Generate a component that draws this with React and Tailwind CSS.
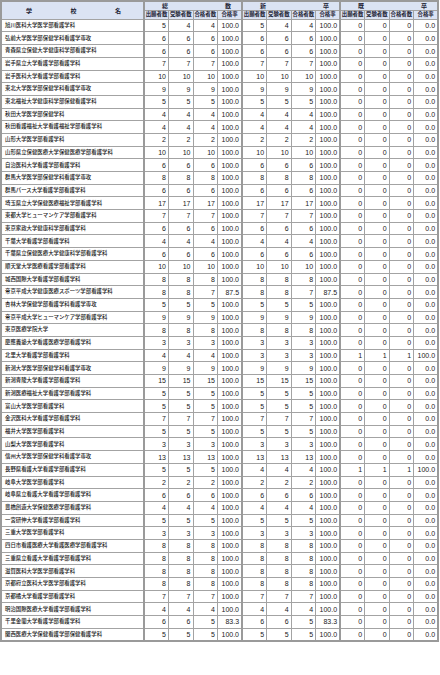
import React from 'react';

// [school, applicants, examinees, passed, old-grad applicants, old examinees, old passed]
const schools = [
  ['旭川医科大学医学部看護学科', 5, 4, 4],
  ['弘前大学医学部保健学科看護学専攻', 6, 6, 6],
  ['青森県立保健大学健康科学部看護学科', 6, 6, 6],
  ['岩手県立大学看護学部看護学科', 7, 7, 7],
  ['岩手医科大学看護学部看護学科', 10, 10, 10],
  ['東北大学医学部保健学科看護学専攻', 9, 9, 9],
  ['東北福祉大学健康科学部保健看護学科', 5, 5, 5],
  ['秋田大学医学部保健学科', 4, 4, 4],
  ['秋田看護福祉大学看護福祉学部看護学科', 4, 4, 4],
  ['山形大学医学部看護学科', 2, 2, 2],
  ['山形県立保健医療大学保健医療学部看護学科', 10, 10, 10],
  ['自治医科大学看護学部看護学科', 6, 6, 6],
  ['群馬大学医学部保健学科看護学専攻', 8, 8, 8],
  ['群馬パース大学看護学部看護学科', 6, 6, 6],
  ['埼玉県立大学保健医療福祉学部看護学科', 17, 17, 17],
  ['東都大学ヒューマンケア学部看護学科', 7, 7, 7],
  ['東京家政大学健康科学部看護学科', 6, 6, 6],
  ['千葉大学看護学部看護学科', 4, 4, 4],
  ['千葉県立保健医療大学健康科学部看護学科', 6, 6, 6],
  ['順天堂大学医療看護学部看護学科', 10, 10, 10],
  ['城西国際大学看護学部看護学科', 8, 8, 8],
  ['帝京平成大学健康医療スポーツ学部看護学科', 8, 8, 7],
  ['杏林大学保健学部看護学科看護学専攻', 5, 5, 5],
  ['帝京平成大学ヒューマンケア学部看護学科', 9, 9, 9],
  ['東京医療学院大学', 8, 8, 8],
  ['慶應義塾大学看護医療学部看護学科', 3, 3, 3],
  ['北里大学看護学部看護学科', 4, 4, 4, 1, 1, 1],
  ['新潟大学医学部保健学科看護学専攻', 9, 9, 9],
  ['新潟青陵大学看護学部看護学科', 15, 15, 15],
  ['新潟医療福祉大学看護学部看護学科', 5, 5, 5],
  ['富山大学医学部看護学科', 5, 5, 5],
  ['金沢医科大学看護学部看護学科', 7, 7, 7],
  ['福井大学医学部看護学科', 5, 5, 5],
  ['山梨大学医学部看護学科', 3, 3, 3],
  ['信州大学医学部保健学科看護学専攻', 13, 13, 13],
  ['長野県看護大学看護学部看護学科', 5, 5, 5, 1, 1, 1],
  ['岐阜大学医学部看護学科', 2, 2, 2],
  ['岐阜県立看護大学看護学部看護学科', 6, 6, 6],
  ['豊橋創造大学保健医療学部看護学科', 4, 4, 4],
  ['一宮研伸大学看護学部看護学科', 5, 5, 5],
  ['三重大学医学部看護学科', 3, 3, 3],
  ['四日市看護医療大学看護医療学部看護学科', 8, 8, 8],
  ['三重県立看護大学看護学部看護学科', 8, 8, 8],
  ['滋賀医科大学医学部看護学科', 8, 8, 8],
  ['京都府立医科大学医学部看護学科', 8, 8, 8],
  ['京都橘大学看護学部看護学科', 7, 7, 7],
  ['明治国際医療大学看護学部看護学科', 4, 4, 4],
  ['千里金蘭大学看護学部看護学科', 6, 6, 5],
  ['関西医療大学保健看護学部保健看護学科', 5, 5, 5],
];

const rate = (b, c) => (b ? ((c / b) * 100).toFixed(1) : '0.0');

const groups = ['総数', '新卒', '既卒'];
const subs = ['出願者数', '受験者数', '合格者数', '合格率'];

const jp = { fontFamily: '"Noto Sans CJK JP", "Noto Sans", sans-serif' };
const num = { fontFamily: '"Liberation Sans", Arial, sans-serif' };

function NumCells({ a, b, c }) {
  const vals = [a, b, c, rate(b, c)];
  return vals.map((v, i) => (
    <td
      key={i}
      className={`border border-[#a3a3a3] text-right pr-[2px] text-[7px] leading-none text-[#1a1a1a] ${
        i === 3 ? 'border-r-[2px] border-r-[#9a9a9a]' : ''
      }`}
      style={num}
    >
      {v}
    </td>
  ));
}

export default function App() {
  return (
    <div className="bg-white w-[440px] min-h-[675px]">
      <table className="border-collapse table-fixed w-[437px] border-[2px] border-[#9a9a9a]">
        <colgroup>
          <col className="w-[143px]" />
          {Array.from({ length: 12 }).map((_, i) => (
            <col key={i} className="w-[24.5px]" />
          ))}
        </colgroup>
        <thead>
          <tr className="h-[9.5px] bg-[#dbe3f3]">
            <th
              rowSpan={2}
              className="border border-[#a3a3a3] border-r-[2px] border-r-[#9a9a9a] pl-[24px] pr-[22px] font-bold text-[6px] text-[#1b2233]"
              style={jp}
            >
              <div className="flex justify-between">
                <span>学</span>
                <span>校</span>
                <span>名</span>
              </div>
            </th>
            {groups.map((g) => (
              <th
                key={g}
                colSpan={4}
                className="border border-[#a3a3a3] border-r-[2px] border-r-[#9a9a9a] pl-[17px] pr-[10px] font-bold text-[6px] leading-none text-[#1b2233]"
                style={jp}
              >
                <div className="flex justify-between">
                  <span>{g[0]}</span>
                  <span>{g[1]}</span>
                </div>
              </th>
            ))}
          </tr>
          <tr className="h-[8.8px] bg-[#dbe3f3]">
            {groups.map((g) =>
              subs.map((s, i) => (
                <th
                  key={g + s}
                  className={`border border-[#a3a3a3] p-0 font-bold text-[5.4px] leading-none text-[#1b2233] whitespace-nowrap ${
                    i === 3 ? 'border-r-[2px] border-r-[#9a9a9a]' : ''
                  }`}
                  style={jp}
                >
                  {s}
                </th>
              ))
            )}
          </tr>
        </thead>
        <tbody>
          {schools.map(([name, a, b, c, ka = 0, kb = 0, kc = 0]) => (
            <tr key={name} className="h-[12.7px]">
              <td
                className="border border-[#a3a3a3] border-r-[2px] border-r-[#9a9a9a] pl-[3px] text-[5.4px] font-medium leading-none text-[#1a1a1a] whitespace-nowrap overflow-hidden"
                style={jp}
              >
                {name}
              </td>
              <NumCells a={a} b={b} c={c} />
              <NumCells a={a - ka} b={b - kb} c={c - kc} />
              <NumCells a={ka} b={kb} c={kc} />
            </tr>
          ))}
        </tbody>
      </table>
    </div>
  );
}
